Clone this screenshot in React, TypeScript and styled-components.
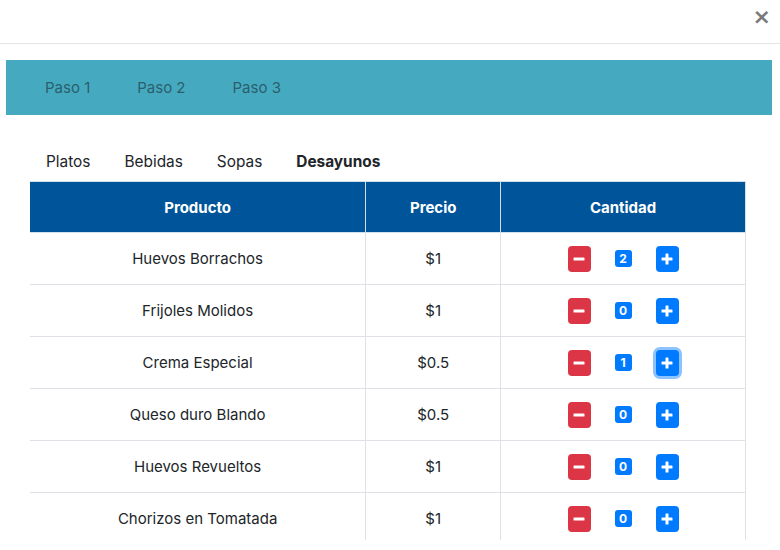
import React from "react";
import styled, { createGlobalStyle, css } from "styled-components";

const Global = createGlobalStyle`
  html, body { margin: 0; padding: 0; background: #fff; }
  body { font-family: Inter, "Noto Sans", "Liberation Sans", sans-serif; color: #212529; }
  * { box-sizing: border-box; }
`;

const Modal = styled.div`
  width: 780px;
  height: 540px;
  overflow: hidden;
  background: #fff;
`;

const Header = styled.div`
  height: 44px;
  border-bottom: 1px solid #e5e5e5;
  display: flex;
  justify-content: flex-end;
  align-items: flex-start;
  padding: 6px 9px 0 0;
`;

const Close = styled.button`
  border: 0;
  background: none;
  padding: 0;
  color: #7a7a7a;
  font-size: 22px;
  font-weight: 700;
  line-height: 22px;
  font-family: "DejaVu Sans", sans-serif;
  cursor: pointer;
`;

const Body = styled.div`
  padding: 16px 8px 0 6px;
`;

const StepBar = styled.nav`
  height: 55px;
  background: #45aac0;
  display: flex;
  align-items: center;
  padding-left: 39px;
  gap: 47px;
`;

const Step = styled.a`
  font-size: 15px;
  color: #2b5f6d;
`;

const Content = styled.div`
  padding: 0 26px 0 24px;
`;

const Tabs = styled.div`
  display: flex;
  gap: 34px;
  height: 66px;
  align-items: flex-end;
  padding: 0 0 10px 16px;
`;

const Tab = styled.span<{ $active?: boolean }>`
  font-size: 15.4px;
  color: #212529;
  font-weight: ${(p) => (p.$active ? 700 : 400)};
`;

const Table = styled.table`
  width: 716px;
  border-collapse: collapse;
  font-size: 15px;
`;

const Th = styled.th<{ $w: number }>`
  width: ${(p) => p.$w}px;
  height: 51px;
  background: #00559a;
  color: #fff;
  font-weight: 700;
  text-align: center;
  border-top: 1px solid #cfe0ef;
  border-bottom: 1px solid #cfe0ef;
  & + & { border-left: 1px solid #d4dde6; }
  &:last-child { border-right: 1px solid #d4dde6; }
`;

const Td = styled.td`
  height: 52px;
  text-align: center;
  padding-bottom: 1px;
  border-bottom: 1px solid #dee2e6;
  & + & { border-left: 1px solid #dee2e6; }
  &:last-child { border-right: 1px solid #dee2e6; }
`;

const Qty = styled.div`
  display: flex;
  align-items: center;
  justify-content: center;
  gap: 24px;
`;

const IconBtn = styled.button<{ $variant: "minus" | "plus"; $focus?: boolean }>`
  width: 23px;
  height: 26px;
  border: 0;
  border-radius: 4px;
  padding: 0;
  display: flex;
  align-items: center;
  justify-content: center;
  background: ${(p) => (p.$variant === "minus" ? "#dc3545" : "#007bff")};
  ${(p) =>
    p.$focus &&
    css`
      box-shadow: 0 0 0 3px rgba(0, 123, 255, 0.45);
    `}
`;

const Badge = styled.span`
  min-width: 17px;
  height: 17px;
  padding: 0 4px;
  border-radius: 3px;
  background: #007bff;
  color: #fff;
  font-size: 12px;
  font-weight: 700;
  display: flex;
  align-items: center;
  justify-content: center;
`;

const MinusIcon = () => (
  <svg width="12" height="12" viewBox="0 0 12 12">
    <rect x="0.5" y="4.5" width="11" height="3" rx="0.6" fill="#fff" />
  </svg>
);

const PlusIcon = () => (
  <svg width="12" height="12" viewBox="0 0 12 12">
    <rect x="0.5" y="4.5" width="11" height="3" rx="0.6" fill="#fff" />
    <rect x="4.5" y="0.5" width="3" height="11" rx="0.6" fill="#fff" />
  </svg>
);

const rows = [
  { name: "Huevos Borrachos", price: "$1", qty: 2 },
  { name: "Frijoles Molidos", price: "$1", qty: 0 },
  { name: "Crema Especial", price: "$0.5", qty: 1, focus: true },
  { name: "Queso duro Blando", price: "$0.5", qty: 0 },
  { name: "Huevos Revueltos", price: "$1", qty: 0 },
  { name: "Chorizos en Tomatada", price: "$1", qty: 0 },
];

export default function App() {
  return (
    <Modal>
      <Global />
      <Header>
        <Close aria-label="Close">×</Close>
      </Header>
      <Body>
        <StepBar>
          <Step>Paso 1</Step>
          <Step>Paso 2</Step>
          <Step>Paso 3</Step>
        </StepBar>
        <Content>
          <Tabs>
            <Tab>Platos</Tab>
            <Tab>Bebidas</Tab>
            <Tab>Sopas</Tab>
            <Tab $active>Desayunos</Tab>
          </Tabs>
          <Table>
            <thead>
              <tr>
                <Th $w={336}>Producto</Th>
                <Th $w={135}>Precio</Th>
                <Th $w={245}>Cantidad</Th>
              </tr>
            </thead>
            <tbody>
              {rows.map((r) => (
                <tr key={r.name}>
                  <Td>{r.name}</Td>
                  <Td>{r.price}</Td>
                  <Td>
                    <Qty>
                      <IconBtn $variant="minus">
                        <MinusIcon />
                      </IconBtn>
                      <Badge>{r.qty}</Badge>
                      <IconBtn $variant="plus" $focus={r.focus}>
                        <PlusIcon />
                      </IconBtn>
                    </Qty>
                  </Td>
                </tr>
              ))}
            </tbody>
          </Table>
        </Content>
      </Body>
    </Modal>
  );
}
